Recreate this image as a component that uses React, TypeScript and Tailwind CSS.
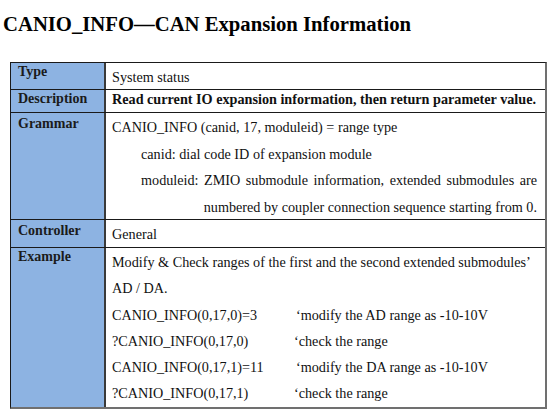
import React from "react";

function Row({
  label,
  labelPt,
  height,
  children,
  last,
}: {
  label: string;
  labelPt: string;
  height: string;
  children: React.ReactNode;
  last?: boolean;
}) {
  return (
    <div className={`flex ${height} ${last ? "" : "border-b border-[#1a1a1a]"}`}>
      <div
        className={`w-[93px] shrink-0 bg-[#8db3e2] pl-[7px] ${labelPt} font-bold text-[14px] leading-[16px] text-[#1b1b1b]`}
      >
        {label}
      </div>
      <div className="flex-1 border-l-2 border-[#3a3a3a] pl-[6px] pr-[8px] text-[14.2px] text-[#111]">
        {children}
      </div>
    </div>
  );
}

export default function App() {
  return (
    <div className="w-[549px] h-[412px] bg-white overflow-hidden font-['Liberation_Serif','Times_New_Roman',serif]">
      <div className="pt-[12px] pl-[3px] h-[62px]">
        <div className="text-[20.7px] leading-[24px] font-bold text-black">
          CANIO_INFO—CAN Expansion Information
        </div>
      </div>
      <div className="ml-[10px] w-[537px] border-t border-l border-[#1a1a1a] border-r-2 border-b-2 border-r-[#707070] border-b-[#707070]">
        <Row label="Type" labelPt="pt-[1px]" height="h-[27px]">
          <div className="pt-[6px] leading-[16px]">System status</div>
        </Row>
        <Row label="Description" labelPt="pt-[1px]" height="h-[23px]">
          <div className="pt-[1px] leading-[16px] font-bold whitespace-nowrap">
            Read current IO expansion information, then return parameter value.
          </div>
        </Row>
        <Row label="Grammar" labelPt="pt-[3px]" height="h-[107px]">
          <div className="pt-[1px] leading-[26.6px]">
            <div>CANIO_INFO (canid, 17, moduleid) = range type</div>
            <div className="pl-[29px]">canid: dial code ID of expansion module</div>
            <div className="pl-[29px] text-justify [text-align-last:justify]">
              moduleid: ZMIO submodule information, extended submodules are
            </div>
            <div className="text-right whitespace-nowrap">
              numbered by coupler connection sequence starting from 0.
            </div>
          </div>
        </Row>
        <Row label="Controller" labelPt="pt-[3px]" height="h-[28px]">
          <div className="pt-[6px] leading-[16px]">General</div>
        </Row>
        <Row label="Example" labelPt="pt-[1px]" height="h-[159px]" last>
          <div className="pt-[1px] leading-[26.3px] whitespace-nowrap">
            <div>Modify &amp; Check ranges of the first and the second extended submodules’</div>
            <div>AD / DA.</div>
            <div className="flex">
              <span className="w-[184px]">CANIO_INFO(0,17,0)=3</span>
              <span>‘modify the AD range as -10-10V</span>
            </div>
            <div className="flex">
              <span className="w-[182px]">?CANIO_INFO(0,17,0)</span>
              <span>‘check the range</span>
            </div>
            <div className="flex">
              <span className="w-[184px]">CANIO_INFO(0,17,1)=11</span>
              <span>‘modify the DA range as -10-10V</span>
            </div>
            <div className="flex">
              <span className="w-[182px]">?CANIO_INFO(0,17,1)</span>
              <span>‘check the range</span>
            </div>
          </div>
        </Row>
      </div>
    </div>
  );
}
